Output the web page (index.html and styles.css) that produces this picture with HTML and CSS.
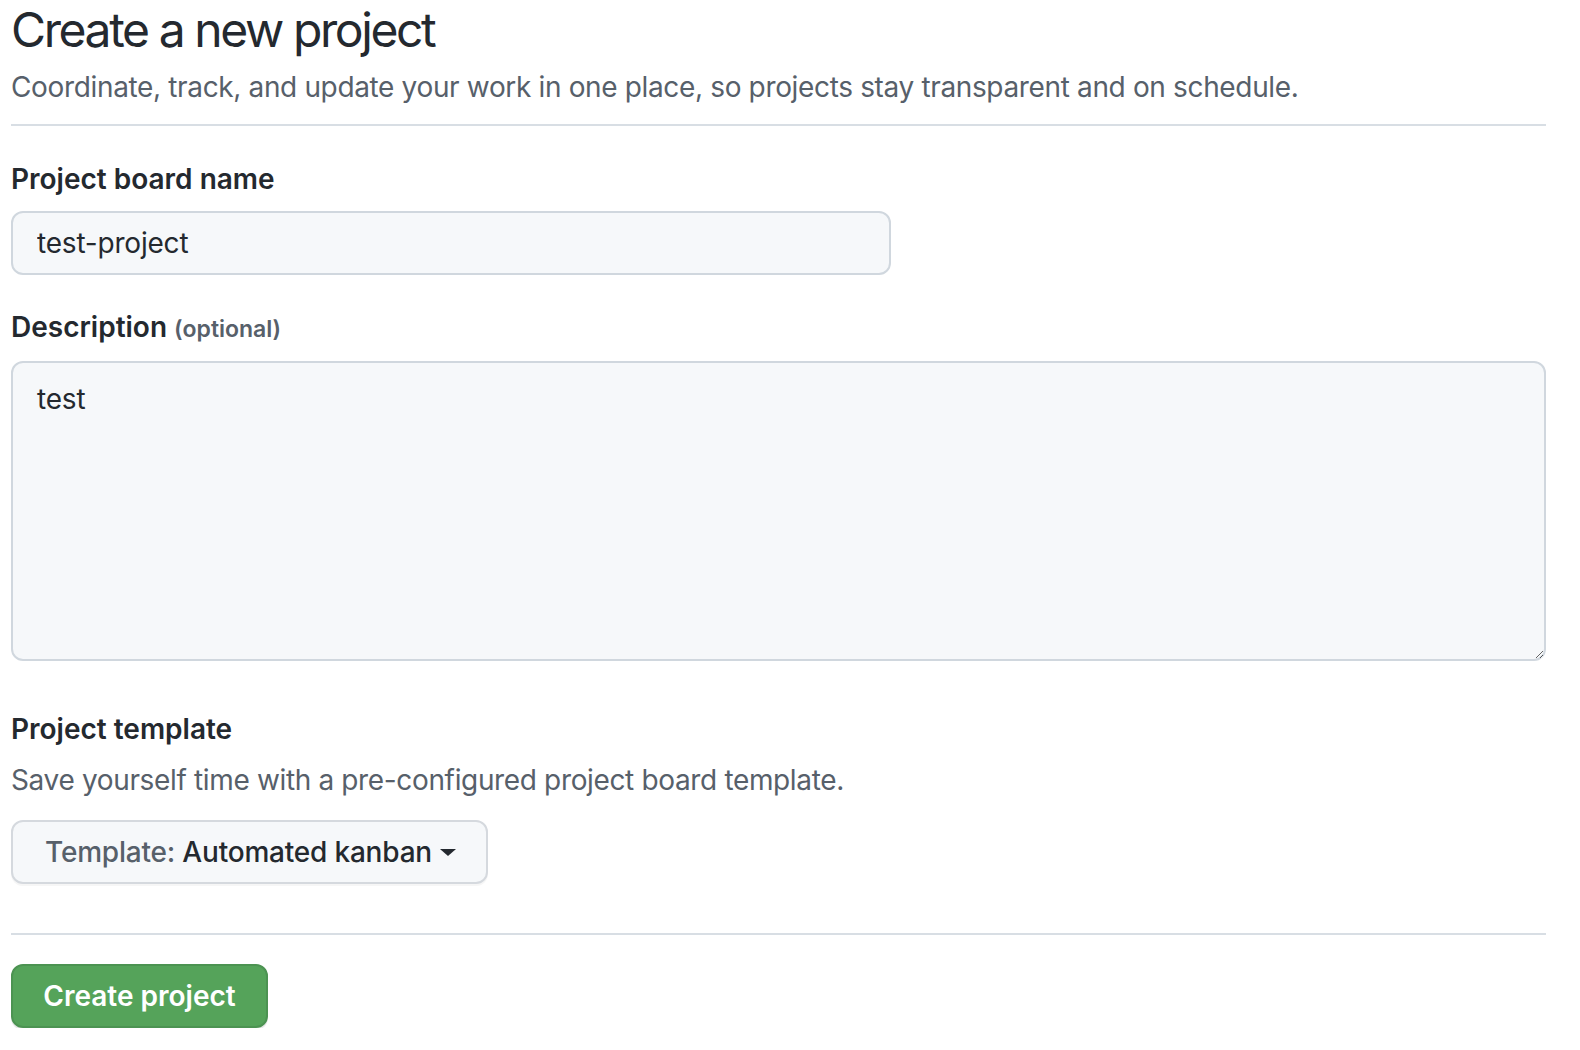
FILE: index.html
```html
<!DOCTYPE html>
<html lang="en">
<head>
<meta charset="utf-8">
<title>Create a new project</title>
<link rel="stylesheet" href="styles.css">
</head>
<body>
<main class="page">
  <header class="head">
    <h1 class="title">Create a new project</h1>
    <p class="lead">Coordinate, track, and update your work in one place, so projects stay transparent and on schedule.</p>
  </header>
  <form class="form">
    <div class="field field-name">
      <label class="label" for="name">Project board name</label>
      <input class="input" id="name" type="text" value="test-project">
    </div>
    <div class="field field-desc">
      <label class="label" for="desc">Description <span class="optional">(optional)</span></label>
      <textarea class="textarea" id="desc">test</textarea>
    </div>
    <div class="field template-field">
      <div class="label">Project template</div>
      <p class="note">Save yourself time with a pre-configured project board template.</p>
      <button type="button" class="select-btn"><span class="muted">Template:</span> Automated kanban <span class="caret"></span></button>
    </div>
    <div class="actions">
      <button type="button" class="btn-primary">Create project</button>
    </div>
  </form>
</main>
</body>
</html>
```

FILE: styles.css
```css
html, body {
  margin: 0;
  padding: 0;
  background: #ffffff;
}
body {
  font-family: Inter, "Liberation Sans", Arial, sans-serif;
  color: #24292f;
}
.page {
  width: 1535px;
  padding: 0 11px;
}
.head {
  border-bottom: 2px solid #d8dee4;
  padding-bottom: 16px;
}
.title {
  margin: 0;
  font-size: 48px;
  line-height: 60px;
  font-weight: 400;
  letter-spacing: -2.4px;
}
.lead {
  margin: 6px 0 0;
  font-size: 28px;
  line-height: 42px;
  color: #57606a;
  letter-spacing: -0.35px;
}
.form {
  display: flex;
  flex-direction: column;
}
.field {
  display: flex;
  flex-direction: column;
  align-items: flex-start;
}
.field-name {
  margin-top: 32px;
}
.field-desc {
  margin-top: 31px;
}
.label {
  font-size: 28px;
  line-height: 42px;
  font-weight: 600;
  margin-bottom: 11px;
}
.optional {
  font-size: 23px;
  color: #57606a;
}
.input, .textarea {
  box-sizing: border-box;
  font-family: inherit;
  font-size: 28px;
  letter-spacing: -0.2px;
  color: #24292f;
  background: #f6f8fa;
  border: 2px solid #d0d7de;
  border-radius: 12px;
  padding: 0 24px;
  outline: none;
}
.input {
  width: 880px;
  height: 64px;
}
.textarea {
  display: block;
  width: 1535px;
  height: 300px;
  padding: 16px 24px 9px;
  line-height: 40px;
  resize: vertical;
}
.template-field {
  margin-top: 47px;
}
.template-field .label {
  margin-bottom: 0;
}
.note {
  margin: 9px 0 19px;
  font-size: 28px;
  line-height: 42px;
  color: #57606a;
  letter-spacing: -0.35px;
}
.select-btn {
  box-sizing: border-box;
  height: 64px;
  width: 477px;
  padding: 0 32px;
  display: flex;
  align-items: center;
  white-space: pre;
  font-family: inherit;
  font-size: 28px;
  font-weight: 500;
  letter-spacing: -0.2px;
  color: #24292f;
  background: #f6f8fa;
  border: 2px solid #d5d9de;
  border-radius: 12px;
  box-shadow: 0 2px 0 rgba(27, 31, 36, 0.04);
}
.muted {
  color: #57606a;
}
.caret {
  display: inline-block;
  width: 0;
  height: 0;
  margin-left: 1px;
  border-top: 7px solid #24292f;
  border-left: 8px solid transparent;
  border-right: 8px solid transparent;
}
.actions {
  margin-top: 49px;
  border-top: 2px solid #d8dee4;
  padding-top: 29px;
}
.btn-primary {
  box-sizing: border-box;
  height: 64px;
  width: 257px;
  padding: 0;
  font-family: inherit;
  font-size: 28px;
  font-weight: 600;
  color: #ffffff;
  background: #55a35a;
  border: 2px solid #4c9352;
  border-radius: 12px;
  box-shadow: 0 2px 0 rgba(27, 31, 36, 0.1);
}
```
